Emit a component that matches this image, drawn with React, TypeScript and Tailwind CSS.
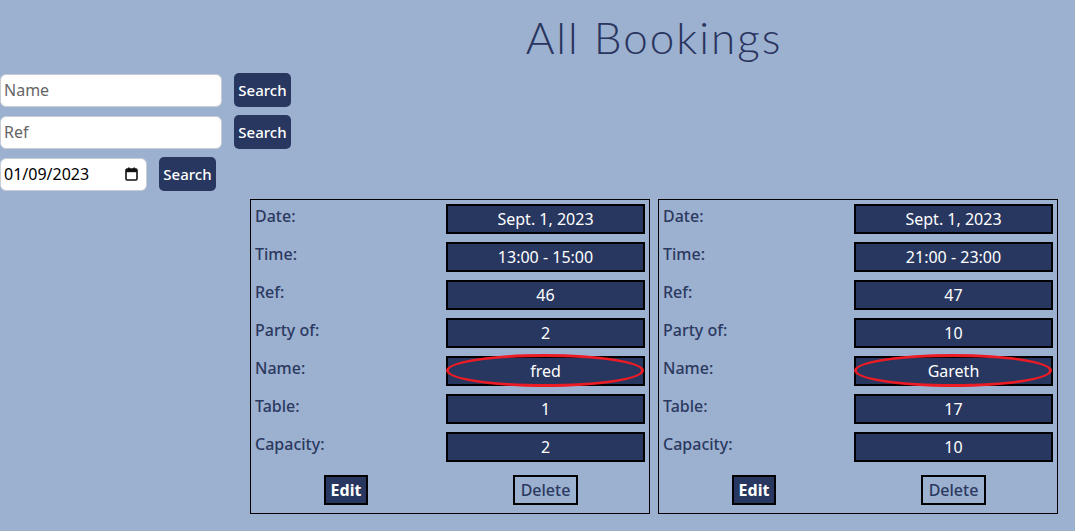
import React from "react";

type Booking = {
  date: string;
  time: string;
  ref: string;
  party: string;
  name: string;
  table: string;
  capacity: string;
};

const bookings: Booking[] = [
  { date: "Sept. 1, 2023", time: "13:00 - 15:00", ref: "46", party: "2", name: "fred", table: "1", capacity: "2" },
  { date: "Sept. 1, 2023", time: "21:00 - 23:00", ref: "47", party: "10", name: "Gareth", table: "17", capacity: "10" },
];

function Row({ label, value, circled }: { label: string; value: string; circled?: boolean }) {
  return (
    <div className="flex h-[30px] items-start justify-between">
      <div className="leading-[24px] text-[#2b3960] font-medium">{label}</div>
      <div className="relative flex h-[30px] w-[199px] items-center justify-center border-2 border-black bg-[#283760] text-white">
        <span className="leading-none">{value}</span>
        {circled && (
          <div className="pointer-events-none absolute left-[-2px] right-[-1px] top-[-4px] bottom-[-3px] rounded-[50%] border-[3.5px] border-[#ed1c24]" />
        )}
      </div>
    </div>
  );
}

function Card({ b }: { b: Booking }) {
  return (
    <div className="flex w-[400px] flex-col border border-black px-[4px] pt-[4px] pb-[8px]">
      <div className="flex flex-col gap-[8px]">
        <Row label="Date:" value={b.date} />
        <Row label="Time:" value={b.time} />
        <Row label="Ref:" value={b.ref} />
        <Row label="Party of:" value={b.party} />
        <Row label="Name:" value={b.name} circled />
        <Row label="Table:" value={b.table} />
        <Row label="Capacity:" value={b.capacity} />
      </div>
      <div className="mt-[13px] flex gap-[145px] pl-[69px]">
        <button className="h-[30px] w-[44px] border-2 border-black bg-[#283760] font-bold text-white">Edit</button>
        <button className="h-[30px] w-[65px] border-2 border-black bg-transparent font-medium text-[#2b3960]">Delete</button>
      </div>
    </div>
  );
}

function CalendarIcon() {
  return (
    <svg width="13" height="14" viewBox="0 0 13 14" className="block">
      <rect x="1" y="2" width="11" height="11" rx="1.2" fill="none" stroke="#111" strokeWidth="1.6" />
      <rect x="1" y="2" width="11" height="3.2" fill="#111" />
      <rect x="3" y="0.5" width="1.6" height="2.5" fill="#111" />
      <rect x="8.4" y="0.5" width="1.6" height="2.5" fill="#111" />
    </svg>
  );
}

export default function App() {
  return (
    <div className="min-h-[531px] w-full bg-[#9cb0d0] font-['Noto_Sans','Open_Sans',sans-serif] text-[16px]">
      <h1 className="pl-[233px] pt-[13px] text-center font-['Lato','Noto_Sans',sans-serif] text-[44px] font-light tracking-[2px] leading-[48px] text-[#29355e]">
        All Bookings
      </h1>
      <div className="mt-[12px] flex flex-col gap-[8px]">
        <div className="flex items-center gap-[12px]">
          <input
            placeholder="Name"
            className="h-[33px] w-[222px] rounded-[6px] border border-[#c8ccd4] bg-white pl-[3px] text-[16px] text-black placeholder:text-[#666] outline-none"
          />
          <button className="h-[34px] w-[57px] rounded-[5px] bg-[#283760] text-[15px] font-medium text-white">Search</button>
        </div>
        <div className="flex items-center gap-[12px]">
          <input
            placeholder="Ref"
            className="h-[33px] w-[222px] rounded-[6px] border border-[#c8ccd4] bg-white pl-[3px] text-[16px] text-black placeholder:text-[#666] outline-none"
          />
          <button className="h-[34px] w-[57px] rounded-[5px] bg-[#283760] text-[15px] font-medium text-white">Search</button>
        </div>
        <div className="flex items-center gap-[12px]">
          <div className="flex h-[33px] w-[147px] items-center justify-between rounded-[6px] border border-[#c8ccd4] bg-white pl-[3px] pr-[8px] text-[16px] text-black">
            <span>01/09/2023</span>
            <CalendarIcon />
          </div>
          <button className="h-[34px] w-[57px] rounded-[5px] bg-[#283760] text-[15px] font-medium text-white">Search</button>
        </div>
      </div>
      <div className="ml-[250px] mt-[8px] flex gap-[8px]">
        {bookings.map((b) => (
          <Card key={b.ref} b={b} />
        ))}
      </div>
    </div>
  );
}
